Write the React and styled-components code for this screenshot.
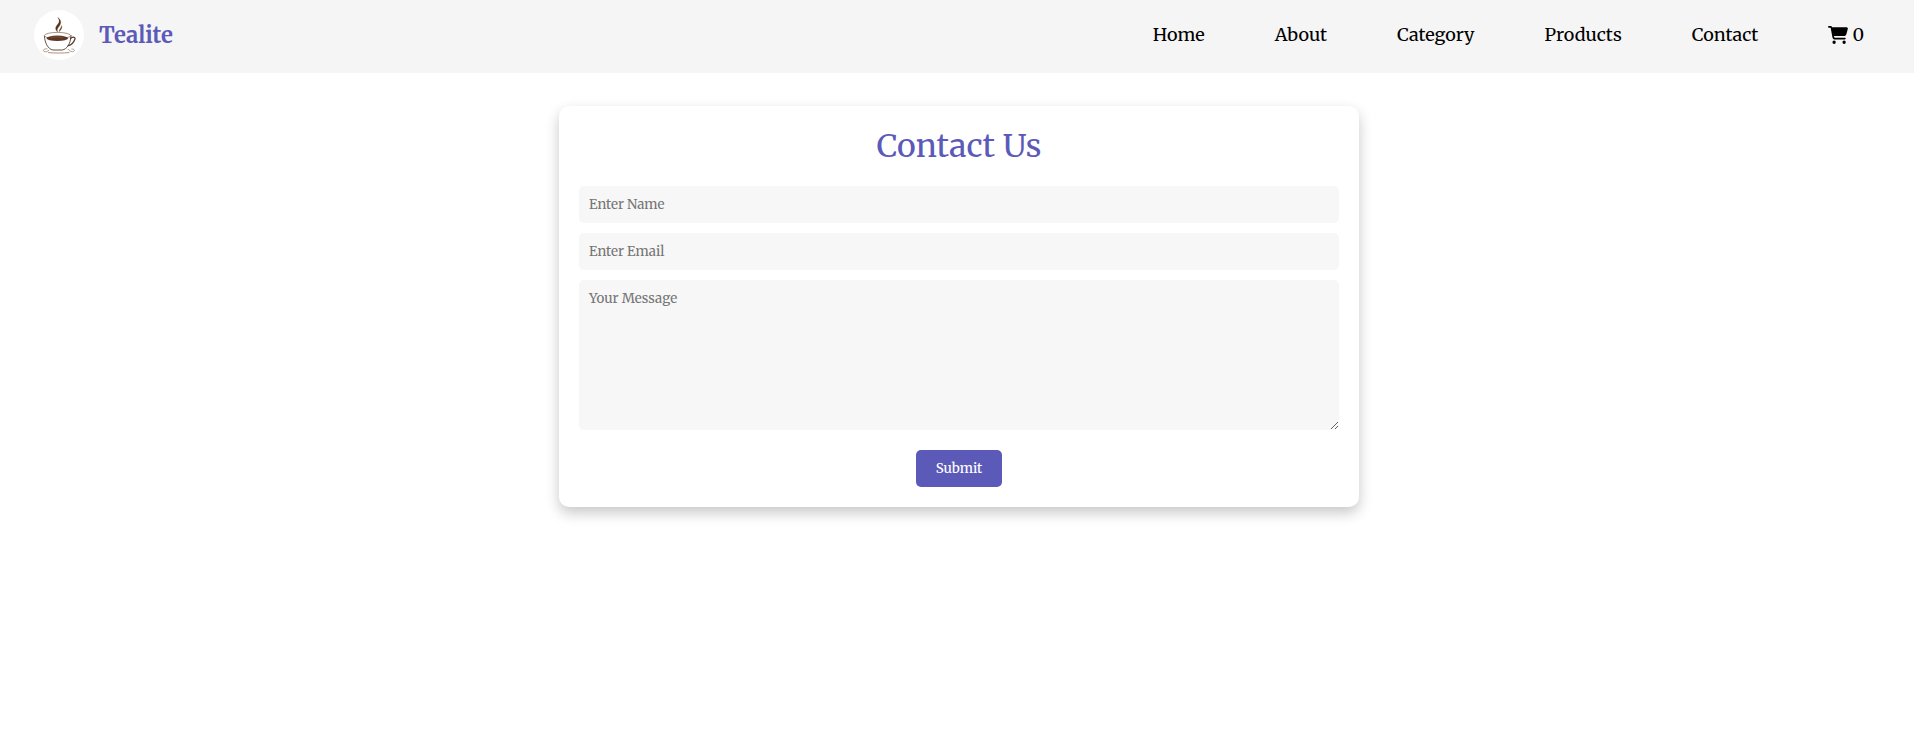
import React, { useState } from "react";
import styled, { createGlobalStyle } from "styled-components";
import { FaCartShopping } from "react-icons/fa6";

const GlobalStyle = createGlobalStyle`
  *, *::before, *::after { box-sizing: border-box; }
  body {
    margin: 0;
    background: #fff;
    color: #000;
    font-family: Merriweather, "DejaVu Serif Condensed", "DejaVu Serif", serif;
  }
`;

const Header = styled.header`
  display: flex;
  align-items: center;
  justify-content: space-between;
  height: 73px;
  padding: 0 50px 3px 34px;
  background: #f5f5f5;
`;

const Brand = styled.a`
  display: flex;
  align-items: center;
  gap: 15px;
  color: #5c5ab8;
  font-size: 22px;
  font-weight: 700;
  text-decoration: none;
`;

const LogoDisc = styled.span`
  display: flex;
  width: 50px;
  height: 50px;
  border-radius: 50%;
  background: #fff;
`;

const NavList = styled.ul`
  display: flex;
  gap: 70px;
  margin: 0;
  padding: 0;
  list-style: none;
`;

const NavLink = styled.a`
  display: flex;
  align-items: center;
  gap: 4px;
  color: #000;
  font-size: 18px;
  line-height: 24px;
  text-decoration: none;
`;

const Main = styled.main`
  display: flex;
  justify-content: center;
  padding: 33px 0 33px 4px;
`;

const Card = styled.section`
  width: 100%;
  max-width: 800px;
  padding: 20px;
  border-radius: 10px;
  background: #fff;
  box-shadow: 0 6px 14px rgba(0, 0, 0, 0.22);
`;

const Title = styled.h1`
  margin: 0 0 20px;
  color: #5c5ab8;
  font-size: 32px;
  font-weight: 400;
  line-height: 40px;
  text-align: center;
`;

const Form = styled.form`
  display: flex;
  flex-direction: column;
  gap: 10px;
`;

const Field = styled.input`
  display: block;
  width: 100%;
  height: ${(p) => (p.as === "textarea" ? "150px" : "37px")};
  padding: 10px;
  border: 0;
  border-radius: 5px;
  background: #f7f7f7;
  font-family: inherit;
  line-height: 17px;

  &::placeholder { color: #757575; }
`;

const SubmitButton = styled.button`
  align-self: center;
  height: 37px;
  margin-top: 10px;
  padding: 0 20px;
  border: 0;
  border-radius: 5px;
  background: #5c5ab8;
  color: #fff;
  font-family: inherit;
  font-weight: 500;
  cursor: pointer;
`;

const LINKS = ["Home", "About", "Category", "Products", "Contact"];

function TeaLogo() {
  return (
    <svg viewBox="0 0 50 50" width="50" height="50" aria-hidden="true">
      <g fill="none" stroke="#6b4f40" strokeLinecap="round">
        <path d="M10.400 26C10.800 33 14 39.200 19 40h9.200c5-.8 8.300-6.300 8.800-14" strokeWidth="1" />
        <ellipse cx="23.700" cy="25.600" rx="13.300" ry="3.200" strokeWidth=".8" stroke="#8f7869" />
        <path d="M36.500 28.400c3-2 5.200-1.300 4.300 1.100-.9 2.500-3.300 5.300-6.600 6.200" strokeWidth="1.300" stroke="#5d3f2f" />
        <path d="M13 38.800c-2.500-.2-4.600 1.200-3.300 2.400 1.600 1.300 4 .5 5.200-1M34 39.300c1.500 1.800 4.500 3.200 6 1.900 1.200-1.200-.2-2.300-2.200-2.200" strokeWidth=".8" stroke="#9b8475" />
        <path d="M14.500 42.600c6 .6 14.500 .6 20.500 0" strokeWidth=".8" stroke="#9b7460" />
      </g>
      <ellipse cx="23.300" cy="28.300" rx="10.800" ry="2.700" fill="#5d3722" />
      <path d="M17 27.500q6-1.500 12 .2" fill="none" stroke="#8a6249" strokeWidth=".6" />
      <path d="M23.800 7.400c3.800 2.800 3.600 6.200 1.200 9-1.800 2.100-2.200 3.600-1.400 5.500-2.900-2.500-2.200-5.200.2-7.700 1.800-2.200 1.900-4.300 0-6.800z" fill="#54341f" stroke="#54341f" strokeWidth=".3" />
      <path d="M27.600 15.500c.8 2.300-.2 4.200-2.700 6.300.3-2.500 2-3.300 2.700-6.300z" fill="#6b452f" stroke="#6b452f" strokeWidth=".3" />
    </svg>
  );
}

export default function App() {
  const [count] = useState(0);
  return (
    <>
      <GlobalStyle />
      <Header>
        <Brand href="#home">
          <LogoDisc><TeaLogo /></LogoDisc>
          Tealite
        </Brand>
        <nav aria-label="Main">
          <NavList>
            {LINKS.map((name) => (
              <li key={name}>
                <NavLink href={`#${name.toLowerCase()}`}>{name}</NavLink>
              </li>
            ))}
            <li>
              <NavLink href="#cart" aria-label="Cart">
                <FaCartShopping size={20} aria-hidden="true" />
                {count}
              </NavLink>
            </li>
          </NavList>
        </nav>
      </Header>
      <Main>
        <Card>
          <Title>Contact Us</Title>
          <Form onSubmit={(e) => e.preventDefault()}>
            <Field type="text" name="name" placeholder="Enter Name" aria-label="Name" />
            <Field type="email" name="email" placeholder="Enter Email" aria-label="Email" />
            <Field as="textarea" name="message" placeholder="Your Message" aria-label="Message" />
            <SubmitButton type="submit">Submit</SubmitButton>
          </Form>
        </Card>
      </Main>
    </>
  );
}
